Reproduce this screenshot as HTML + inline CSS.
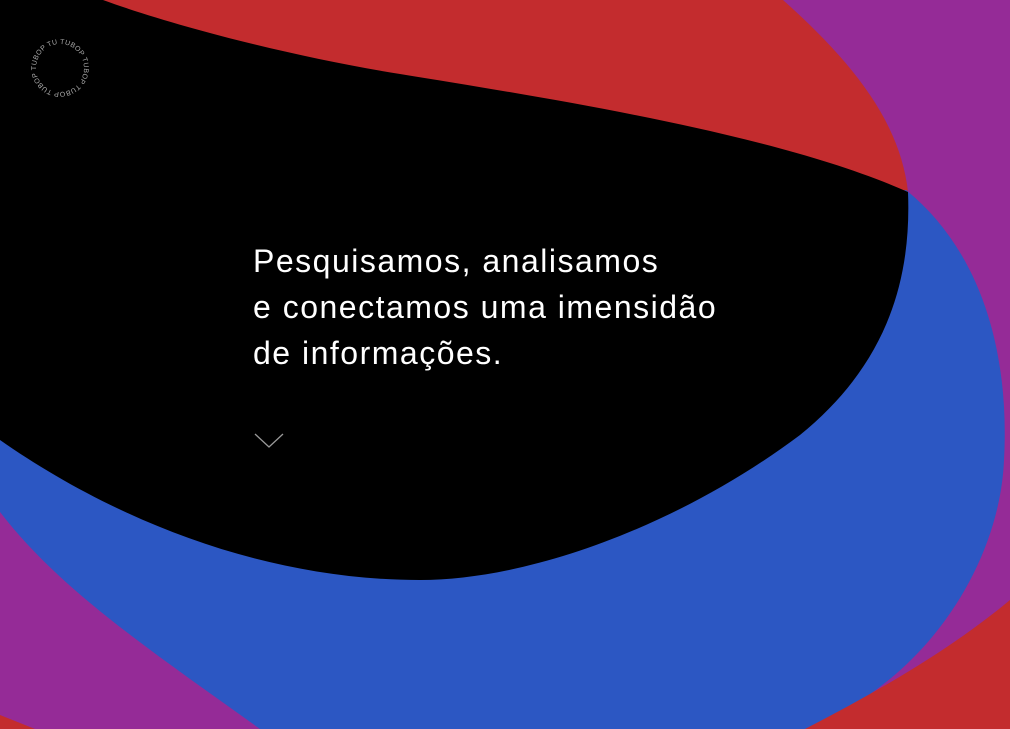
<!DOCTYPE html>
<html><head><meta charset="utf-8"><style>
html,body{margin:0;padding:0;background:#952b97;width:1010px;height:729px;overflow:hidden}
svg{position:absolute;left:0;top:0}
.t{position:absolute;left:253px;top:238px;color:#fff;font-family:"Liberation Sans",sans-serif;font-size:32px;line-height:46px;letter-spacing:1.5px}
</style></head><body>
<svg width="1010" height="729" viewBox="0 0 1010 729">
<rect width="1010" height="729" fill="#952b97"/>
<path d="M0 0 L783 0 C850 60 900 120 908 192 L908 260 L0 260 Z" fill="#c32c2e"/>
<path d="M906 190 C980 250 1010 350 1004 460 C1000 560 930 680 805 729 L260 729 C150 650 60 590 0 512 L0 400 Z" fill="#2c57c3"/>
<path d="M805 729 C880 690 950 650 1010 600 L1010 729 Z" fill="#c32c2e"/>
<path d="M0 715 L35 729 L0 729 Z" fill="#c32c2e"/>
<path d="M0 0 L103 0 C180 28 300 58 400 74 C560 100 780 135 908 192 C912 290 880 370 800 435 C680 525 530 580 420 580 C250 580 100 510 0 440 Z" fill="#000"/>
<defs><path id="c" d="M60 44 a24 24 0 1 1 -0.01 0"/></defs>
<text font-family="Liberation Sans,sans-serif" font-size="7" fill="#aaa" letter-spacing="0.3"><textPath href="#c">TUBOP TUBOP TUBOP TUBOP TUBOP TUBOP</textPath></text>
<polyline points="255,434 269,447 283,434" fill="none" stroke="#999" stroke-width="1.3"/>
</svg>
<div class="t">Pesquisamos, analisamos<br>e conectamos uma imensidão<br>de informações.</div>
</body></html>
